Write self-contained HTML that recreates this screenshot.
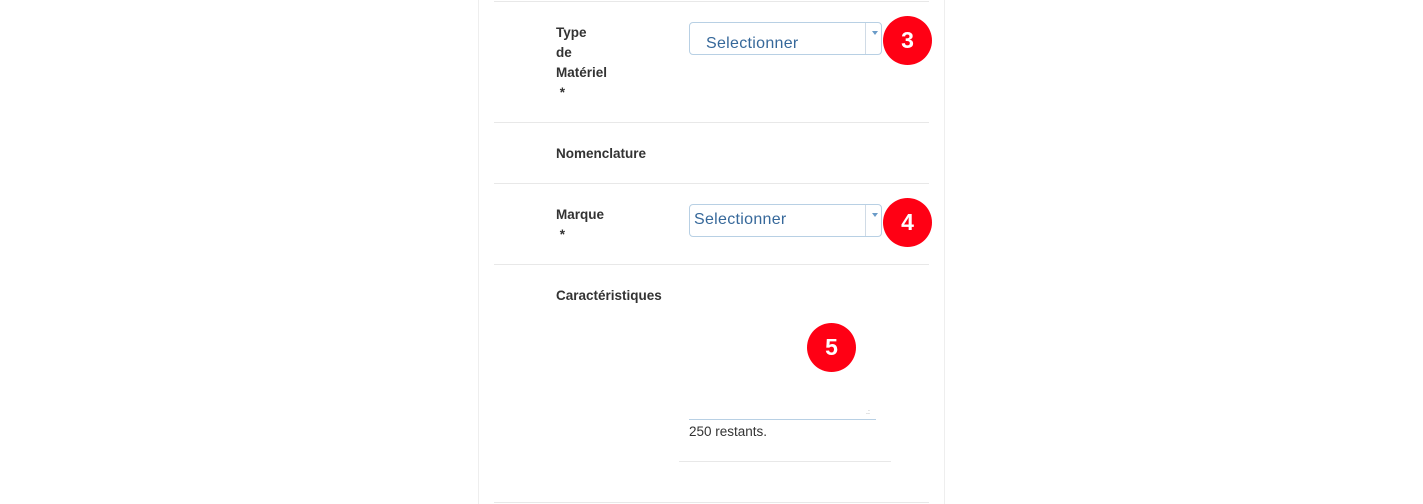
<!DOCTYPE html><html><head><style>
body{margin:0;width:1423px;height:504px;background:#fff;font-family:"Liberation Sans",sans-serif;position:relative;overflow:hidden}
.a{position:absolute}
.pl{left:478px;top:0;width:465px;height:504px;border-left:1px solid #eee;border-right:1px solid #eee}
.hl{height:1px;background:#e8e8e8}
.lb{font-weight:bold;font-size:13.5px;color:#333;line-height:20px}
.sel{width:193px;height:33px;border:1px solid #b8d0e4;border-radius:4px;font-size:16px;letter-spacing:0.3px;color:#36689a;box-sizing:border-box}
.sel .d{position:absolute;right:15px;top:0;bottom:0;border-left:1px solid #d0dbe6}
.sel .t{position:absolute;right:3px;top:8px;width:0;height:0;border-left:3px solid transparent;border-right:3px solid transparent;border-top:4px solid #6a9bc8}
.c{width:49px;height:49px;border-radius:50%;background:#ff0014;color:#fff;font-weight:bold;font-size:23px;text-align:center;line-height:49px}
</style></head><body>
<div class="a pl"></div>
<div class="a hl" style="left:494px;top:1px;width:435px"></div>
<div class="a hl" style="left:494px;top:122px;width:435px"></div>
<div class="a hl" style="left:494px;top:183px;width:435px"></div>
<div class="a hl" style="left:494px;top:264px;width:435px"></div>
<div class="a hl" style="left:494px;top:502px;width:435px"></div>
<div class="a hl" style="left:679px;top:461px;width:212px"></div>
<div class="a lb" style="left:556px;top:23px">Type<br>de<br>Matériel<br>&nbsp;*</div>
<div class="a lb" style="left:556px;top:144px">Nomenclature</div>
<div class="a lb" style="left:556px;top:205px">Marque<br>&nbsp;*</div>
<div class="a lb" style="left:556px;top:286px">Caractéristiques</div>
<div class="a sel" style="left:689px;top:22px"><span class="a" style="left:16px;top:12px">Selectionner</span><div class="d"></div><div class="t"></div></div>
<div class="a sel" style="left:689px;top:204px"><span class="a" style="left:4px;top:6px">Selectionner</span><div class="d"></div><div class="t"></div></div>
<div class="a c" style="left:883px;top:16px">3</div>
<div class="a c" style="left:883px;top:198px">4</div>
<div class="a c" style="left:807px;top:323px">5</div>
<div class="a" style="left:689px;top:419px;width:187px;height:1px;background:#b8d0e4"></div>
<div class="a" style="left:866px;top:410px;color:#999;font-size:7px;line-height:6px">.:</div>
<div class="a" style="left:689px;top:424px;font-size:13.5px;color:#333">250 restants.</div>
</body></html>
